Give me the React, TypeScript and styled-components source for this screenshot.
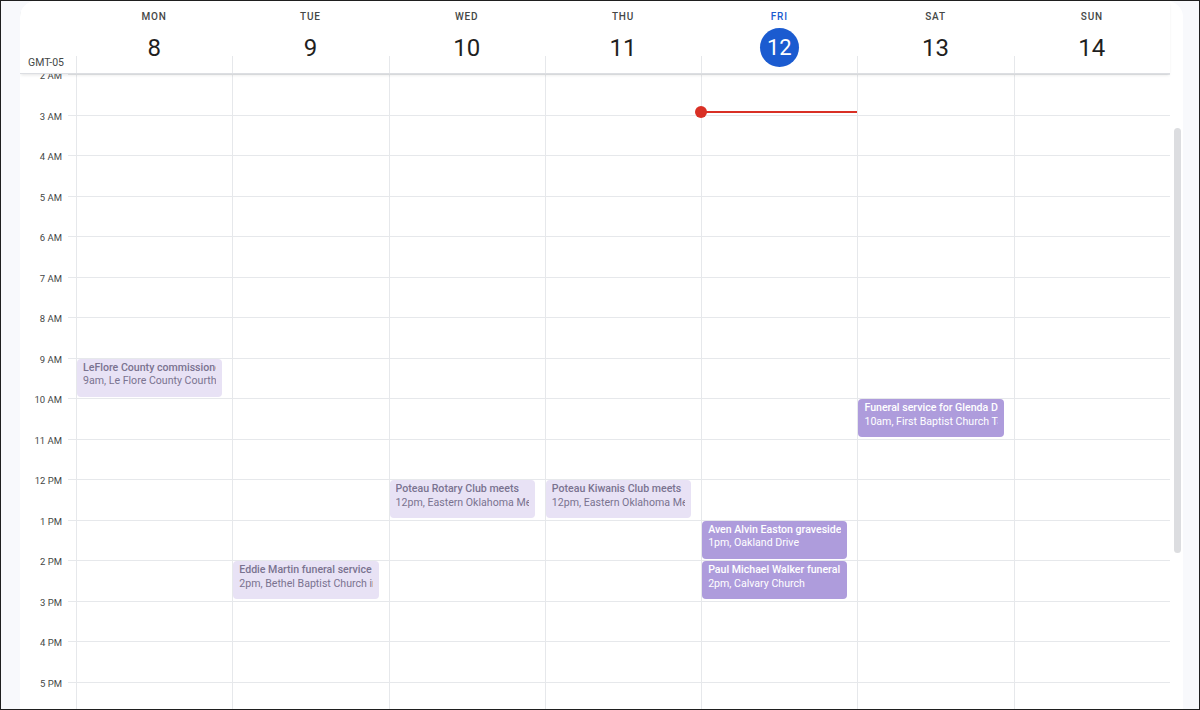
import React, { useEffect, useRef } from "react";
import styled, { createGlobalStyle, css } from "styled-components";

const ROW = 40.5;
const GUTTER = 56;

const GlobalStyle = createGlobalStyle`
  html, body {
    margin: 0;
    padding: 0;
  }
  body {
    font-family: Roboto, "Noto Sans", "Liberation Sans", sans-serif;
    color: #1f1f1f;
  }
  * {
    box-sizing: border-box;
  }
`;

const Frame = styled.div`
  width: 1200px;
  height: 710px;
  border: 1px solid #1f1f1f;
  background: #f8f9fc;
  padding: 0 16px 0 19px;
  overflow: hidden;
`;

const Panel = styled.main`
  height: 100%;
  background: #fff;
  border-radius: 16px 16px 0 0;
  display: flex;
  flex-direction: column;
  overflow: hidden;
`;

const HeaderRow = styled.header`
  position: relative;
  z-index: 2;
  display: grid;
  grid-template-columns: ${GUTTER}px repeat(7, 1fr);
  height: 72px;
  margin-right: 13px;
  background: #fff;
  box-shadow: 0 1px 0 #dcdee2, 0 3px 3px -1px rgba(60, 64, 67, 0.14);
`;

const Zone = styled.div`
  display: flex;
  align-items: flex-end;
  justify-content: flex-end;
  padding: 0 12px 4px 0;
  font-size: 10.5px;
  color: #444746;
  white-space: nowrap;
`;

const DayHead = styled.div`
  position: relative;
  display: flex;
  flex-direction: column;
  align-items: center;
  padding-top: 10px;

  &::before {
    content: "";
    position: absolute;
    left: 0;
    top: 55px;
    bottom: 0;
    width: 1px;
    background: #e6e8eb;
  }
`;

const DayName = styled.div<{ $today?: boolean }>`
  font-size: 10px;
  line-height: 12px;
  font-weight: 500;
  letter-spacing: 0.8px;
  color: ${(p) => (p.$today ? "#1b5bd0" : "#444746")};
`;

const DayNumber = styled.div<{ $today?: boolean }>`
  margin-top: 5px;
  width: 39px;
  height: 39px;
  border-radius: 50%;
  display: flex;
  align-items: center;
  justify-content: center;
  font-size: 24px;
  font-weight: 400;
  color: #1f1f1f;

  ${(p) =>
    p.$today &&
    css`
      background: #1b5bd0;
      color: #fff;
      font-size: 22px;
    `}
`;

const BodyRow = styled.div`
  flex: 1;
  min-height: 0;
  display: flex;
`;

const Viewport = styled.div`
  flex: 1;
  overflow: hidden;
`;

const ScrollTrack = styled.div`
  width: 13px;
  flex-shrink: 0;
  padding: 55px 2px 0 4px;
`;

const ScrollThumb = styled.div`
  height: 425px;
  border-radius: 4px;
  background: #dcdde0;
`;

const Grid = styled.div`
  display: grid;
  grid-template-columns: ${GUTTER}px repeat(7, 1fr);
`;

const Gutter = styled.div`
  display: flex;
  flex-direction: column;
`;

const TimeSlot = styled.div`
  position: relative;
  height: ${ROW}px;
  display: flex;
  align-items: flex-start;
  justify-content: flex-end;
  padding-right: 14px;

  &::after {
    content: "";
    position: absolute;
    right: 0;
    top: 0;
    width: 8px;
    height: 1px;
    background: #e6e8eb;
  }
`;

const TimeLabel = styled.span`
  font-size: 9.5px;
  line-height: 12px;
  color: #444746;
  transform: translateY(-4px);
  white-space: nowrap;
`;

const DayColumn = styled.div`
  position: relative;
  display: flex;
  flex-direction: column;
  border-left: 1px solid #e6e8eb;
`;

const HourCell = styled.div`
  height: ${ROW}px;
  border-top: 1px solid #e6e8eb;
  flex-shrink: 0;
`;

const Event = styled.div<{ $faded?: boolean }>`
  position: absolute;
  left: 0;
  right: 10px;
  border-radius: 4px;
  padding: 2px 6px;
  overflow: hidden;
  white-space: nowrap;
  font-size: 10.6px;
  line-height: 13.5px;
  background: ${(p) => (p.$faded ? "#e8e2f5" : "#ae9cdc")};
  color: ${(p) => (p.$faded ? "#7a7390" : "#ffffff")};
`;

const EventTitle = styled.div`
  font-weight: 500;
  overflow: hidden;
`;

const EventMeta = styled.div`
  overflow: hidden;
`;

const NowLine = styled.div`
  position: absolute;
  left: -1px;
  right: 0;
  height: 2px;
  background: #d93025;
  z-index: 1;

  &::before {
    content: "";
    position: absolute;
    left: -6px;
    top: -5px;
    width: 12px;
    height: 12px;
    border-radius: 50%;
    background: #d93025;
  }
`;

const days = [
  { name: "MON", date: 8 },
  { name: "TUE", date: 9 },
  { name: "WED", date: 10 },
  { name: "THU", date: 11 },
  { name: "FRI", date: 12, today: true },
  { name: "SAT", date: 13 },
  { name: "SUN", date: 14 },
];

const events = [
  { day: 0, start: 9, title: "LeFlore County commissioners meeting", meta: "9am, Le Flore County Courthouse", faded: true },
  { day: 1, start: 14, title: "Eddie Martin funeral service", meta: "2pm, Bethel Baptist Church in Poteau", faded: true },
  { day: 2, start: 12, title: "Poteau Rotary Club meets", meta: "12pm, Eastern Oklahoma Medical Center", faded: true },
  { day: 3, start: 12, title: "Poteau Kiwanis Club meets", meta: "12pm, Eastern Oklahoma Medical Center", faded: true },
  { day: 4, start: 13, title: "Aven Alvin Easton graveside", meta: "1pm, Oakland Drive" },
  { day: 4, start: 14, title: "Paul Michael Walker funeral service", meta: "2pm, Calvary Church" },
  { day: 5, start: 10, title: "Funeral service for Glenda Davis", meta: "10am, First Baptist Church Talihina" },
];

const hourLabel = (h: number) => {
  if (h === 0) return "";
  if (h < 12) return `${h} AM`;
  if (h === 12) return "12 PM";
  return `${h - 12} PM`;
};

const hours = Array.from({ length: 24 }, (_, i) => i);
const now = 2 + 56 / 60;

export default function App() {
  const viewRef = useRef<HTMLDivElement>(null);

  useEffect(() => {
    if (viewRef.current) viewRef.current.scrollTop = 80;
  }, []);

  return (
    <>
      <GlobalStyle />
      <Frame>
        <Panel>
          <HeaderRow>
            <Zone>GMT-05</Zone>
            {days.map((d) => (
              <DayHead key={d.name}>
                <DayName $today={d.today}>{d.name}</DayName>
                <DayNumber $today={d.today}>{d.date}</DayNumber>
              </DayHead>
            ))}
          </HeaderRow>
          <BodyRow>
            <Viewport ref={viewRef}>
              <Grid>
                <Gutter>
                  {hours.map((h) => (
                    <TimeSlot key={h}>
                      <TimeLabel>{hourLabel(h)}</TimeLabel>
                    </TimeSlot>
                  ))}
                </Gutter>
                {days.map((d, di) => (
                  <DayColumn key={d.name}>
                    {hours.map((h) => (
                      <HourCell key={h} />
                    ))}
                    {events
                      .filter((e) => e.day === di)
                      .map((e) => (
                        <Event
                          key={e.title}
                          $faded={e.faded}
                          style={{ top: e.start * ROW + 1, height: ROW - 2.5 }}
                        >
                          <EventTitle>{e.title}</EventTitle>
                          <EventMeta>{e.meta}</EventMeta>
                        </Event>
                      ))}
                    {d.today && <NowLine style={{ top: now * ROW - 1 }} />}
                  </DayColumn>
                ))}
              </Grid>
            </Viewport>
            <ScrollTrack>
              <ScrollThumb />
            </ScrollTrack>
          </BodyRow>
        </Panel>
      </Frame>
    </>
  );
}
